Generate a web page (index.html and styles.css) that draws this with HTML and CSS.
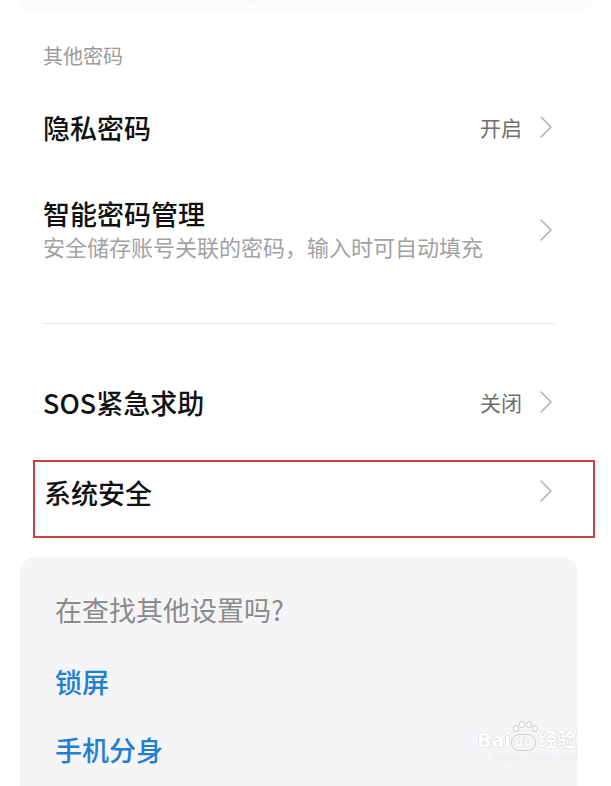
FILE: index.html
```html
<!DOCTYPE html>
<html lang="zh-CN">
<head>
    <meta charset="UTF-8">
    <meta name="viewport" content="width=device-width, initial-scale=1.0">
    <link rel="stylesheet" href="styles.css">
</head>
<body>
    <div class="top-fade"></div>

    <div class="section-label">其他密码</div>

    <div class="row row-privacy">
        <div class="row-title">隐私密码</div>
        <div class="row-end">
            <span class="row-value">开启</span>
            <svg class="chevron" width="12" height="22" viewBox="0 0 12 22"><polyline points="1,1 11,11 1,21" fill="none" stroke="#b4b4b4" stroke-width="1.6" stroke-linejoin="round" stroke-linecap="round"/></svg>
        </div>
    </div>

    <div class="row row-smart">
        <div class="row-text">
            <div class="row-title">智能密码管理</div>
            <div class="row-sub">安全储存账号关联的密码，输入时可自动填充</div>
        </div>
        <div class="row-end">
            <svg class="chevron" width="12" height="22" viewBox="0 0 12 22"><polyline points="1,1 11,11 1,21" fill="none" stroke="#b4b4b4" stroke-width="1.6" stroke-linejoin="round" stroke-linecap="round"/></svg>
        </div>
    </div>

    <div class="divider"></div>

    <div class="row row-sos">
        <div class="row-title">SOS紧急求助</div>
        <div class="row-end">
            <span class="row-value">关闭</span>
            <svg class="chevron" width="12" height="22" viewBox="0 0 12 22"><polyline points="1,1 11,11 1,21" fill="none" stroke="#b4b4b4" stroke-width="1.6" stroke-linejoin="round" stroke-linecap="round"/></svg>
        </div>
    </div>

    <!-- marked row -->
    <div class="row row-system">
        <div class="row-title">系统安全</div>
        <div class="row-end">
            <svg class="chevron" width="12" height="22" viewBox="0 0 12 22"><polyline points="1,1 11,11 1,21" fill="none" stroke="#b4b4b4" stroke-width="1.6" stroke-linejoin="round" stroke-linecap="round"/></svg>
        </div>
    </div>

    <div class="more-card">
        <div class="more-title">在查找其他设置吗?</div>
        <div class="more-link first">锁屏</div>
        <div class="more-link">手机分身</div>

        <div class="watermark">
            <div class="wm-logo">Bai<span class="wm-paw"><i></i><i></i><i></i><i></i></span><span class="wm-du">du</span>经验</div>
            <div class="wm-url">jingyan.baidu.com</div>
        </div>
    </div>
</body>
</html>
```

FILE: styles.css
```css
* {
    box-sizing: border-box;
}
body {
    margin: 0;
    background-color: #ffffff;
    font-family: "Noto Sans CJK SC", "Noto Sans", sans-serif;
    color: #111111;
    overflow: hidden;
}
.top-fade {
    height: 14px;
    margin: 0 20px;
    background: linear-gradient(#f8f9f9, #ffffff);
}
.section-label {
    height: 56px;
    padding: 28px 0 0 43px;
    font-size: 20px;
    line-height: 28px;
    color: #9a9a9a;
}
.row {
    display: flex;
    align-items: center;
    justify-content: space-between;
    padding: 0 59px 0 43px;
}
.row-title {
    font-size: 27px;
    line-height: 33px;
    font-weight: 500;
    color: #111111;
}
.row-sub {
    font-size: 22px;
    line-height: 33px;
    color: #a2a2a2;
}
.row-end {
    display: flex;
    align-items: center;
    gap: 18px;
}
.row-value {
    font-size: 21px;
    line-height: 28px;
    color: #6e6e6e;
}
.chevron {
    display: block;
}
.row-privacy {
    height: 114px;
}
.row-smart {
    height: 92px;
}
.divider {
    height: 1px;
    margin: 47px 56px 0 43px;
    background-color: #e6e6e6;
}
.row-sos {
    height: 80px;
    margin-top: 38px;
}
.row-system {
    height: 78px;
    margin: 18px 16px 0 33px;
    padding: 0 41px 0 9px;
    border: 2px solid #c9403c;
    align-items: flex-start;
}
.row-system .row-title {
    margin-top: 14px;
}
.row-system .row-end {
    margin-top: 18px;
}
.more-card {
    position: relative;
    margin: 19px 33px 0 20px;
    padding: 19px 35px 40px;
    height: 260px;
    background-color: #f5f5f7;
    border-radius: 16px;
}
.more-title {
    height: 68px;
    font-size: 27px;
    line-height: 68px;
    color: #8a8a8a;
}
.more-link {
    height: 68px;
    font-size: 27px;
    line-height: 68px;
    font-weight: 500;
    color: #1f7fd3;
}
.more-link.first {
    margin-top: 4px;
}
.watermark {
    position: absolute;
    right: 2px;
    top: 172px;
    text-align: right;
    color: #ffffff;
    font-family: "DejaVu Sans", sans-serif;
}
.wm-logo {
    font-size: 19px;
    line-height: 22px;
    font-weight: bold;
    text-shadow: 0 0 1px #c8c8cc, 0 0 1px #c8c8cc;
    display: flex;
    align-items: flex-end;
}
.wm-logo,
.wm-logo .wm-du {
    font-family: "DejaVu Sans", "Noto Sans CJK SC", sans-serif;
}
.wm-paw {
    position: relative;
    width: 0;
}
.wm-paw i {
    position: absolute;
    width: 6px;
    height: 7px;
    border: 1px solid #d0d0d4;
    border-radius: 50%;
    background: #ffffff;
}
.wm-paw i:nth-child(1) { left: 2px; top: -26px; }
.wm-paw i:nth-child(2) { left: 8px; top: -30px; }
.wm-paw i:nth-child(3) { left: 15px; top: -30px; }
.wm-paw i:nth-child(4) { left: 21px; top: -26px; }
.wm-du {
    font-size: 12px;
    line-height: 15px;
    padding: 0 3px;
    margin-right: 2px;
    border: 1px solid #d0d0d4;
    border-radius: 8px;
}
.wm-url {
    font-size: 9px;
    line-height: 13px;
    color: #ffffff;
    text-shadow: 0 0 1px #c8c8cc;
}
```
